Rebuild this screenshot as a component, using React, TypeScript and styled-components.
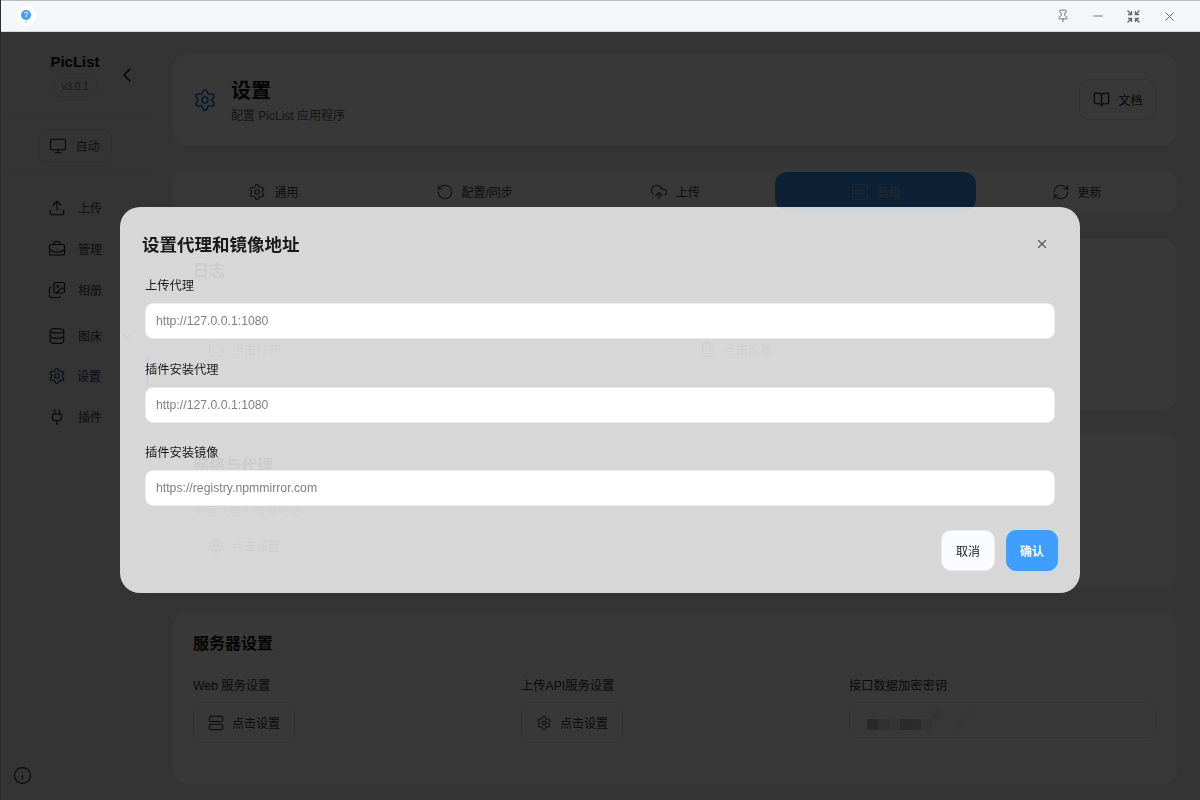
import styled, { createGlobalStyle } from "styled-components";
import {
  BookOpen,
  BriefcaseBusiness,
  ChevronDown,
  ChevronLeft,
  CloudUpload,
  Database,
  FileText,
  Folder,
  Globe,
  Images,
  Info,
  Minus,
  Monitor,
  Pin,
  Plug,
  RefreshCw,
  RotateCcw,
  Server,
  Settings,
  Upload,
  X,
} from "lucide-react";

const GlobalStyle = createGlobalStyle`
  html, body {
    margin: 0;
    padding: 0;
    height: 100%;
    overflow: hidden;
  }
  body {
    font-family: "Liberation Sans", "Noto Sans CJK SC", sans-serif;
    color: #1f1f1f;
  }
  * {
    box-sizing: border-box;
  }
`;

const Window = styled.div`
  width: 1200px;
  height: 800px;
  display: flex;
  flex-direction: column;
  background: #ebebeb;
  border-left: 1px solid #c4c4c4;
`;

const TitleBar = styled.div`
  position: relative;
  z-index: 2;
  height: 32px;
  flex: none;
  display: flex;
  align-items: center;
  padding-left: 15px;
  padding-right: 23px;
  background: #f5f6f9;
  border-top: 1px solid #bdbdbd;
  border-bottom: 1px solid #d8d8d8;
  color: #666a70;
`;

const LogoBadge = styled.div`
  width: 20px;
  height: 20px;
  border-radius: 50%;
  background: #fff;
  display: flex;
  align-items: center;
  justify-content: center;
`;

const TitleActions = styled.div`
  margin-left: auto;
  display: flex;
  align-items: center;
  gap: 21px;
`;

const Body = styled.div`
  flex: 1;
  min-height: 0;
  display: flex;
`;

const Sidebar = styled.aside`
  position: relative;
  width: 149px;
  flex: none;
  display: flex;
  flex-direction: column;
  border-right: 1px solid #e2e2e2;
`;

const Brand = styled.div`
  height: 86px;
  flex: none;
  padding-top: 21px;
  display: flex;
  flex-direction: column;
  align-items: center;
  border-bottom: 1px solid #e0e0e0;
`;

const BrandName = styled.div`
  font-size: 15px;
  font-weight: 700;
  line-height: 18px;
  color: #111;
`;

const Version = styled.div`
  margin-top: 6px;
  height: 20px;
  padding: 0 8px;
  border-radius: 10px;
  border: 1px solid #d8d8d8;
  font-size: 10px;
  line-height: 18px;
  color: #777;
`;

const Collapse = styled.div`
  position: absolute;
  left: 114px;
  top: 31px;
  color: #111;
  display: flex;
`;

const ThemeRow = styled.div`
  height: 56px;
  flex: none;
  display: flex;
  justify-content: center;
  align-items: center;
  padding-right: 1px;
  border-bottom: 1px solid #e0e0e0;
`;

const ThemeButton = styled.div`
  width: 74px;
  height: 34px;
  display: flex;
  align-items: center;
  justify-content: center;
  gap: 8px;
  border: 1px solid #d8d8d8;
  border-radius: 10px;
  font-size: 12px;
  color: #555;
  svg {
    color: #1a1a1a;
  }
`;

const Nav = styled.nav`
  padding-top: 13px;
  padding-left: 47px;
  display: flex;
  flex-direction: column;
`;

const NavItem = styled.div<{ $active?: boolean; $gap?: number }>`
  position: relative;
  height: 41px;
  margin-top: ${(p) => p.$gap ?? 0}px;
  display: flex;
  align-items: center;
  gap: ${(p) => (p.$active ? 11 : 12)}px;
  font-size: 12px;
  color: ${(p) => (p.$active ? "#2f2f8f" : "#4a4a4a")};
  svg {
    color: ${(p) => (p.$active ? "#2f2f8f" : "#1a1a1a")};
  }
  ${(p) =>
    p.$active &&
    `&::after {
      content: "";
      position: absolute;
      left: 98px;
      top: 1px;
      width: 3px;
      height: 30px;
      background: #5a5ae8;
    }`}
`;

const NavChevron = styled.span`
  position: absolute;
  left: 72px;
  top: 14px;
  display: flex;
  color: #333;
`;

const SidebarFoot = styled.div`
  margin-top: auto;
  padding: 0 0 15px 12px;
  color: #222;
  display: flex;
`;

const Main = styled.main`
  flex: 1;
  min-width: 0;
  padding: 21px 22px 0 22px;
  display: flex;
  flex-direction: column;
  gap: 22px;
`;

const Card = styled.section<{ $height: number }>`
  height: ${(p) => p.$height}px;
  flex: none;
  background: #fff;
  border-radius: 16px;
  border: 1px solid #f0f0f0;
`;

const HeaderCard = styled(Card)`
  display: flex;
  align-items: center;
  padding: 0 20px;
  color: #1677c9;
`;

const HeaderText = styled.div`
  margin-left: 14px;
  margin-top: 4px;
`;

const PageTitle = styled.h1`
  margin: 0;
  font-size: 20px;
  line-height: 26px;
  font-weight: 700;
  color: #111;
`;

const PageSub = styled.p`
  margin: 3px 0 0;
  font-size: 12px;
  line-height: 18px;
  color: #666;
`;

const GhostButton = styled.div<{ $width?: number }>`
  width: ${(p) => p.$width ?? 102}px;
  height: 41px;
  display: flex;
  align-items: center;
  justify-content: center;
  gap: 8px;
  border: 1px solid #e2e2e2;
  border-radius: 10px;
  font-size: 12px;
  color: #333;
  flex: none;
  svg {
    color: #1a1a1a;
  }
`;

const DocButton = styled(GhostButton)`
  margin-left: auto;
  color: #111;
`;

const NetButton = styled(GhostButton)`
  margin-top: 5px;
`;

const TabCard = styled(Card)`
  display: grid;
  grid-template-columns: repeat(5, 1fr);
  padding-top: 3px;
  align-items: start;
`;

const Tab = styled.div<{ $active?: boolean }>`
  height: 39px;
  display: flex;
  align-items: center;
  justify-content: center;
  gap: 8px;
  border-radius: 12px;
  font-size: 12px;
  color: ${(p) => (p.$active ? "#a8b8c8" : "#444")};
  background: ${(p) => (p.$active ? "#3b96f5" : "transparent")};
`;

const SectionCard = styled(Card)`
  padding: 20px;
`;

const SectionTitle = styled.h2`
  margin: 0;
  font-size: 16px;
  line-height: 24px;
  font-weight: 700;
  color: #111;
`;

const SectionHint = styled.p`
  margin: 24px 0 0;
  font-size: 12px;
  line-height: 18px;
  color: #777;
`;

const Columns = styled.div<{ $count: number }>`
  margin-top: 21px;
  display: grid;
  grid-template-columns: repeat(${(p) => p.$count}, 1fr);
  column-gap: 20px;
`;

const FieldLabel = styled.div`
  font-size: 12.25px;
  line-height: 18px;
  margin-bottom: 7px;
  color: #333;
`;

const MaskedInput = styled.div`
  height: 36px;
  padding: 5px 17px;
  border: 1px solid #e2e2e2;
  border-radius: 10px;
  display: flex;
`;

const Overlay = styled.div`
  position: fixed;
  inset: 0;
  z-index: 1;
  background: rgba(0, 0, 0, 0.78);
  display: flex;
  align-items: center;
  justify-content: center;
`;

const Modal = styled.div`
  width: 960px;
  height: 386px;
  padding: 24px 22px 22px 25px;
  border-radius: 20px;
  background: rgba(255, 255, 255, 0.8);
  display: flex;
  flex-direction: column;
`;

const ModalHead = styled.div`
  height: 25px;
  margin-left: -3px;
  display: flex;
  align-items: center;
  justify-content: space-between;
  color: #555;
`;

const ModalTitle = styled.h3`
  margin: 0;
  font-size: 17.5px;
  font-weight: 700;
  color: #1a1a1a;
`;

const CloseWrap = styled.div`
  display: flex;
  margin-right: 9px;
`;

const ModalField = styled.div`
  margin-top: 20px;
  height: 63.5px;
`;

const ModalLabel = styled.label`
  display: block;
  font-size: 12.25px;
  line-height: 20px;
  color: #1a1a1a;
`;

const ModalInput = styled.input`
  display: block;
  margin-top: 7px;
  width: 910px;
  height: 36px;
  padding: 0 10px;
  border: 1px solid #ececec;
  border-radius: 8px;
  background: #fff;
  outline: none;
  font-family: "Liberation Sans", sans-serif;
  font-size: 12.25px;
  color: #808080;
  &::placeholder {
    color: #808080;
    opacity: 1;
  }
`;

const ModalFoot = styled.div`
  margin-top: auto;
  display: flex;
  justify-content: flex-end;
  gap: 11px;
`;

const FootButton = styled.button<{ $primary?: boolean }>`
  width: ${(p) => (p.$primary ? 52 : 54)}px;
  height: 41px;
  border: 1px solid ${(p) => (p.$primary ? "#409eff" : "#ececec")};
  border-radius: 10px;
  background: ${(p) => (p.$primary ? "#409eff" : "#fafbfe")};
  color: ${(p) => (p.$primary ? "#fff" : "#222")};
  font-family: inherit;
  font-size: 12px;
  font-weight: ${(p) => (p.$primary ? 700 : 400)};
`;

const mosaic: [number, number, string][] = [
  [0, 0, "#f6fbff"],
  [54, 0, "#fafafa"],
  [65, 0, "#f0f0f0"],
  [87, 0, "#f4fbff"],
  [98, 0, "#f4f6f8"],
  [0, 11, "#bcbcbc"],
  [11, 11, "#dedede"],
  [22, 11, "#e8ecf0"],
  [33, 11, "#c4c2c0"],
  [44, 11, "#ccc8c4"],
  [54, 11, "#ececec"],
  [87, 11, "#f6f6f6"],
];

const Mosaic = () => (
  <svg width="109" height="22" viewBox="0 0 109 22">
    {mosaic.map(([x, y, fill]) => (
      <rect key={`${x}-${y}`} x={x} y={y} width="11" height="11" fill={fill} />
    ))}
  </svg>
);

const ShrinkIcon = () => (
  <svg width="15" height="15" viewBox="0 0 15 15" fill="none" stroke="currentColor" strokeWidth="1.3">
    <path d="M1.5 1.5 5.5 5.5M5.5 2v3.5H2M13.5 1.5 9.5 5.5M9.5 2v3.5H13M1.5 13.5 5.5 9.5M5.5 13V9.5H2M13.5 13.5 9.5 9.5M9.5 13V9.5H13" />
  </svg>
);

const AppLogo = () => (
  <svg width="12" height="14" viewBox="0 0 12 14">
    <circle cx="6" cy="6" r="5" fill="#4a9de8" />
    <path d="M6 10.5 5 13.5 7 13.5Z" fill="#9cc9f0" />
    <path d="M4.6 4.6a1.5 1.5 0 1 1 2 1.5L6 7v1" fill="none" stroke="#fff" strokeWidth="1" />
  </svg>
);

const App = () => {
  return (
    <>
      <GlobalStyle />
      <Window>
        <TitleBar>
          <LogoBadge>
            <AppLogo />
          </LogoBadge>
          <TitleActions>
            <Pin size={14} strokeWidth={1.6} />
            <Minus size={14} strokeWidth={1.6} />
            <ShrinkIcon />
            <X size={15} strokeWidth={1.6} />
          </TitleActions>
        </TitleBar>
        <Body>
          <Sidebar>
            <Brand>
              <BrandName>PicList</BrandName>
              <Version>v3.0.1</Version>
            </Brand>
            <Collapse>
              <ChevronLeft size={24} strokeWidth={1.6} />
            </Collapse>
            <ThemeRow>
              <ThemeButton>
                <Monitor size={18} strokeWidth={1.5} />
                自动
              </ThemeButton>
            </ThemeRow>
            <Nav>
              <NavItem>
                <Upload size={18} strokeWidth={1.5} />
                上传
              </NavItem>
              <NavItem>
                <BriefcaseBusiness size={18} strokeWidth={1.5} />
                管理
              </NavItem>
              <NavItem>
                <Images size={18} strokeWidth={1.5} />
                相册
              </NavItem>
              <NavItem $gap={5}>
                <Database size={18} strokeWidth={1.5} />
                图床
                <NavChevron>
                  <ChevronDown size={14} />
                </NavChevron>
              </NavItem>
              <NavItem $active $gap={-1}>
                <Settings size={18} strokeWidth={1.5} />
                设置
              </NavItem>
              <NavItem>
                <Plug size={18} strokeWidth={1.5} />
                插件
              </NavItem>
            </Nav>
            <SidebarFoot>
              <Info size={19} strokeWidth={1.4} />
            </SidebarFoot>
          </Sidebar>
          <Main>
            <HeaderCard $height={93}>
              <Settings size={24} strokeWidth={1.6} />
              <HeaderText>
                <PageTitle>设置</PageTitle>
                <PageSub>配置 PicList 应用程序</PageSub>
              </HeaderText>
              <DocButton $width={78}>
                <BookOpen size={17} strokeWidth={1.6} />
                文档
              </DocButton>
            </HeaderCard>
            <TabCard $height={48}>
              <Tab>
                <Settings size={18} strokeWidth={1.5} />
                通用
              </Tab>
              <Tab>
                <RotateCcw size={18} strokeWidth={1.5} />
                配置/同步
              </Tab>
              <Tab>
                <CloudUpload size={18} strokeWidth={1.5} />
                上传
              </Tab>
              <Tab $active>
                <Server size={18} strokeWidth={1.5} />
                高级
              </Tab>
              <Tab>
                <RefreshCw size={18} strokeWidth={1.5} />
                更新
              </Tab>
            </TabCard>
            <SectionCard $height={173}>
              <SectionTitle>日志</SectionTitle>
              <Columns $count={2}>
                <div>
                  <FieldLabel>日志文件</FieldLabel>
                  <GhostButton>
                    <Folder size={16} strokeWidth={1.5} />
                    点击打开
                  </GhostButton>
                </div>
                <div>
                  <FieldLabel>日志设置</FieldLabel>
                  <GhostButton>
                    <FileText size={16} strokeWidth={1.5} />
                    点击设置
                  </GhostButton>
                </div>
              </Columns>
            </SectionCard>
            <SectionCard $height={156}>
              <SectionTitle>网络与代理</SectionTitle>
              <SectionHint>设置代理和镜像地址</SectionHint>
              <NetButton>
                <Globe size={16} strokeWidth={1.5} />
                点击设置
              </NetButton>
            </SectionCard>
            <SectionCard $height={174}>
              <SectionTitle>服务器设置</SectionTitle>
              <Columns $count={3}>
                <div>
                  <FieldLabel>Web 服务设置</FieldLabel>
                  <GhostButton>
                    <Server size={16} strokeWidth={1.5} />
                    点击设置
                  </GhostButton>
                </div>
                <div>
                  <FieldLabel>上传API服务设置</FieldLabel>
                  <GhostButton>
                    <Settings size={16} strokeWidth={1.5} />
                    点击设置
                  </GhostButton>
                </div>
                <div>
                  <FieldLabel>接口数据加密密钥</FieldLabel>
                  <MaskedInput>
                    <Mosaic />
                  </MaskedInput>
                </div>
              </Columns>
            </SectionCard>
          </Main>
        </Body>
        <Overlay>
          <Modal>
            <ModalHead>
              <ModalTitle>设置代理和镜像地址</ModalTitle>
              <CloseWrap>
                <X size={14} strokeWidth={2} />
              </CloseWrap>
            </ModalHead>
            <ModalField>
              <ModalLabel>上传代理</ModalLabel>
              <ModalInput placeholder="http://127.0.0.1:1080" readOnly />
            </ModalField>
            <ModalField>
              <ModalLabel>插件安装代理</ModalLabel>
              <ModalInput placeholder="http://127.0.0.1:1080" readOnly />
            </ModalField>
            <ModalField>
              <ModalLabel>插件安装镜像</ModalLabel>
              <ModalInput placeholder="https://registry.npmmirror.com" readOnly />
            </ModalField>
            <ModalFoot>
              <FootButton>取消</FootButton>
              <FootButton $primary>确认</FootButton>
            </ModalFoot>
          </Modal>
        </Overlay>
      </Window>
    </>
  );
};

export default App;
